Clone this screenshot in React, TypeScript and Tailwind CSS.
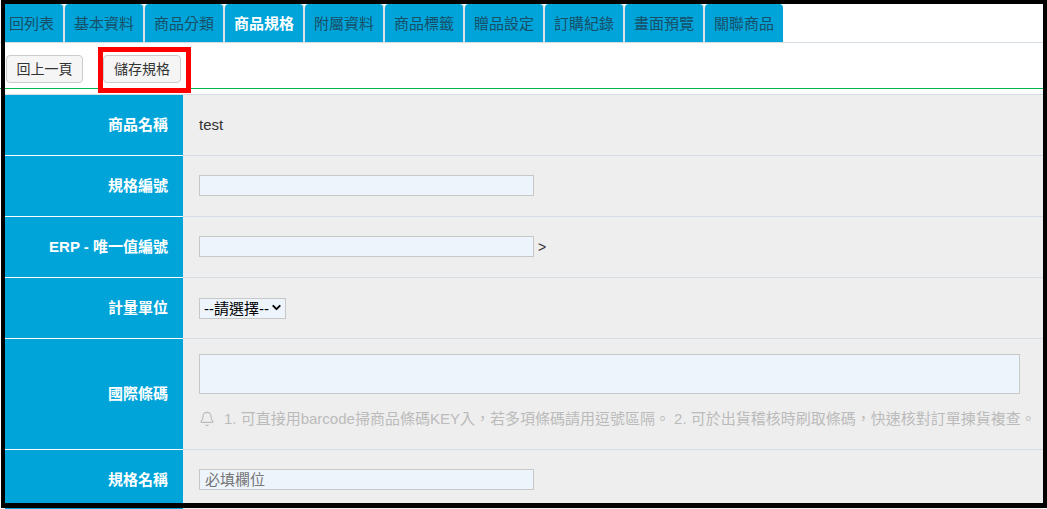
import { Bell, ChevronDown } from "lucide-react";

const font = "font-['Liberation_Sans','Noto_Sans_CJK_TC',sans-serif]";
const tabs = ["基本資料", "商品分類", "商品規格", "附屬資料", "商品標籤", "贈品設定", "訂購紀錄", "畫面預覽", "關聯商品"];
const inputCls = "mb-px block h-[21px] w-[335px] border border-[#c8c8c8] bg-[#edf4fc] px-[5px] text-[15px] leading-[19px] text-[#555] outline-none placeholder:text-[#757575]";

function Row({ label, h, children }: { label: string; h: string; children: React.ReactNode }) {
  return (
    <div className={`flex ${h} border-b border-[#d5dce4]`}>
      <div className="relative flex w-[178px] shrink-0 items-center justify-end bg-[#00a4d9] pr-[15px] text-[15px] font-bold text-white">
        <div className="absolute inset-x-0 -bottom-px h-px bg-white" />
        {label}
      </div>
      <div className="flex min-w-0 flex-1 items-center bg-[#eeeeee] pl-[16px]">{children}</div>
    </div>
  );
}

export default function App() {
  return (
    <div className={`${font} relative h-[509px] w-[1047px] overflow-hidden bg-white`}>
      <div className="box-content flex h-[38px] pl-[5px] pt-[4px]">
        <div className="flex h-[38px] w-[58px] items-center justify-end rounded-tr-[4px] bg-[#00a4d9] pr-[9px] pt-[3px] text-[15px] text-[#174f68] shadow-[2px_0_0_#dde2e8]">回列表</div>
        <div className="ml-[2px] flex gap-[2px]">
          {tabs.map((t, i) => (
            <div
              key={t}
              className={`flex h-[38px] w-[78px] items-center justify-center rounded-t-[4px] bg-[#00a4d9] pt-[3px] text-[15px] ${t === "商品規格" ? "font-bold text-white" : "text-[#174f68]"} ${i < tabs.length - 1 ? "shadow-[2px_0_0_#dde2e8]" : ""}`}
            >
              {t}
            </div>
          ))}
        </div>
      </div>
      <div className="h-px bg-[#d5dce4]" />
      <div className="flex h-[45px] items-start gap-[20px] pl-[5px] pt-[12px]">
        <button className="ml-px h-[28px] w-[77px] rounded-[4px] border border-[#ccc] bg-[#f5f5f5] text-[14px] text-[#333]">回上一頁</button>
        <button className="h-[28px] w-[78px] rounded-[4px] border border-[#ccc] bg-[#f5f5f5] text-[14px] text-[#333]">儲存規格</button>
      </div>
      <div className="h-px bg-[#00b84f]" />
      <div className="h-[5px]" />
      <div className="ml-[5px] mr-[4px] border-t border-[#d5dce4]">
        <Row label="商品名稱" h="h-[61px]"><span className="text-[15px] text-[#333]">test</span></Row>
        <Row label="規格編號" h="h-[61px]"><input className={inputCls} /></Row>
        <Row label="ERP - 唯一值編號" h="h-[61px]">
          <input className={inputCls} />
          <span className="ml-[4px] text-[14px] text-[#333]">&gt;</span>
        </Row>
        <Row label="計量單位" h="h-[61px]">
          <div className="relative mb-px h-[21px] w-[87px]">
            <select className="h-[21px] w-[87px] appearance-none border border-[#c8c8c8] bg-[#edf4fc] pl-[4px] text-[15px] leading-[19px] text-black outline-none">
              <option>--請選擇--</option>
            </select>
            <ChevronDown size={13} strokeWidth={3.5} className="pointer-events-none absolute right-[3px] top-[4px] text-black" />
          </div>
        </Row>
        <Row label="國際條碼" h="h-[111px]">
          <div className="flex flex-col self-start pt-[15px]">
            <textarea className="block h-[40px] w-[821px] resize-none border border-[#c8c8c8] bg-[#edf4fc] outline-none" />
            <div className="mt-[15px] flex items-center whitespace-nowrap text-[15px] leading-[20px] text-[#bbb]">
              <Bell size={16} strokeWidth={1.75} className="mr-[9px] text-[#bbb]" />
              1. 可直接用barcode掃商品條碼KEY入，若多項條碼請用逗號區隔。 2. 可於出貨稽核時刷取條碼，快速核對訂單揀貨複查。
            </div>
          </div>
        </Row>
        <Row label="規格名稱" h="h-[61px]"><input className={inputCls} placeholder="必填欄位" /></Row>
      </div>
      {/* screenshot annotation and frame lie over the page */}
      <div className="pointer-events-none absolute left-[98px] top-[47px] h-[46px] w-[93px] border-[5px] border-[#ff0000]" />
      <div className="pointer-events-none absolute left-px top-0 h-[508px] w-[1046px] border-b-[5px] border-l-[4px] border-r-[4px] border-t-[4px] border-black" />
    </div>
  );
}
